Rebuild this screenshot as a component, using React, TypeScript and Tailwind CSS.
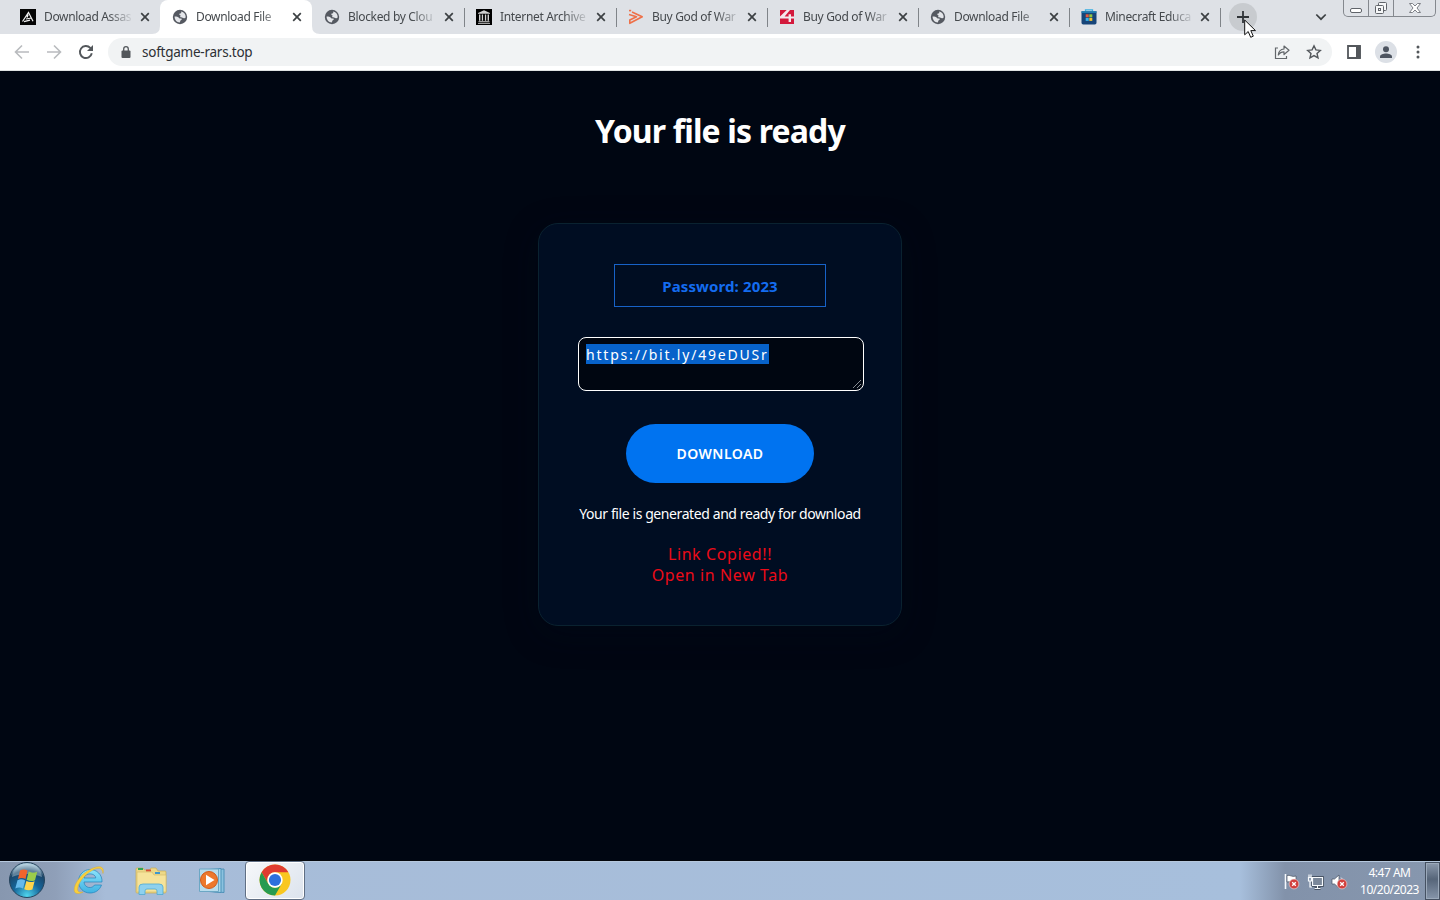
import React from "react";
import clsx from "clsx";

type Tab = {
  title: string;
  icon: React.ReactNode;
  active?: boolean;
  divider?: boolean;
  narrow?: boolean;
};

const GlobeIcon = () => (
  <svg width="16" height="16" viewBox="0 0 16 16">
    <circle cx="8" cy="8" r="7.200" fill="#555961" />
    <path
      d="M2.600 7.600c2 0 3.500.2 4.500 1.300.5.700 1.500.5 2.200.7.900.4.500 1.500-.4 1.600-.8.200-.5 1.200-1.100 2.400C4.700 13.500 2.500 10.900 2.600 7.600ZM9.200 2.400c2.900.6 4.600 3 4.500 5.900-.5 1-1.500 1.100-2.400.6-.9-.6-1.900-.2-2.700-.7-.7-.5-.5-1.400.1-1.800-.9-.4-1.600-.5-1.300-1.400.3-.7 1.500-.2 1.900-.9.200-.5-.4-.9-.1-1.700Z"
      fill="#e4e6ea"
    />
  </svg>
);

const AssassinIcon = () => (
  <svg width="16" height="16" viewBox="0 0 16 16">
    <path d="M0 0h16v16H0z" fill="#050505" />
    <path d="m2.500 12.500 6-9 4.500 8.700M6 10l5.500-1M4 12.700l6-1.500M8.200 5.500 7 8.500" fill="none" stroke="#f3f3f3" strokeWidth="1.200" />
  </svg>
);

const ArchiveIcon = () => (
  <svg width="16" height="16" viewBox="0 0 16 16">
    <path d="M0 0h16v16H0z" fill="#000" />
    <path d="m2 4 6-2.700L14 4v.8H2zM2.500 12.300h11v.9h-11zM2 14h12v.8H2zM3 5.500h1.400v6.300H3zM5.800 5.500h1.300v6.300H5.800zM8.900 5.500h1.300v6.300H8.900zM11.600 5.500H13v6.300h-1.400z" fill="#d2d2d2" />
  </svg>
);

const PlayOutlineIcon = () => (
  <svg width="16" height="16" viewBox="0 0 16 16" fill="none" stroke="#ee7048" strokeWidth="1.600">
    <path d="M4 3 14.200 7.800 1.800 14.300V11L8.500 7.700 1 5.600" strokeLinejoin="round" />
    <path d="M1 1.600h2.200" />
  </svg>
);

const FourIcon = () => (
  <svg width="16" height="16" viewBox="0 0 16 16">
    <path d="M1 1h14v14H1z" fill="#d3193c" />
    <path d="M1 7.500 7.700 1H11L5.600 7.600h4V5.300H12v2.300h3v1.900h-3V13H9.600V9.500H1z" fill="#f4e7eb" />
  </svg>
);

const StoreIcon = () => (
  <svg width="16" height="16" viewBox="0 0 16 16">
    <path d="M4.500 2.500V.8h7v1.700" fill="none" stroke="#38aee2" strokeWidth="1.300" />
    <path d="M.5 2.300h15v11.500q0 1.700-1.700 1.700H2.200Q.5 15.500.5 13.800z" fill="#174579" />
    <path d="M.5 2.300h15v1.500H.5z" fill="#2088bd" />
    <path d="M4.700 5.300h3v3h-3z" fill="#e7593b" />
    <path d="M8.300 5.300h3v3h-3z" fill="#8fc740" />
    <path d="M4.700 8.900h3v3h-3z" fill="#36b2ec" />
    <path d="M8.300 8.900h3v3h-3z" fill="#f5c330" />
  </svg>
);

const CloseIcon = () => (
  <svg width="10" height="10" viewBox="0 0 10 10" stroke="#3c4043" strokeWidth="1.700">
    <path d="m1.200 1.200 7.600 7.600M8.800 1.200 1.200 8.800" />
  </svg>
);

const tabs: Tab[] = [
  { title: "Download Assas", icon: <AssassinIcon /> },
  { title: "Download File", icon: <GlobeIcon />, active: true },
  { title: "Blocked by Clou", icon: <GlobeIcon />, divider: true },
  { title: "Internet Archive", icon: <ArchiveIcon />, divider: true },
  { title: "Buy God of War", icon: <PlayOutlineIcon />, divider: true, narrow: true },
  { title: "Buy God of War", icon: <FourIcon />, divider: true, narrow: true },
  { title: "Download File", icon: <GlobeIcon />, divider: true, narrow: true },
  { title: "Minecraft Educa", icon: <StoreIcon />, divider: true, narrow: true },
];

const BrowserTab = ({ title, icon, active, divider, narrow }: Tab) => (
  <div
    className={clsx(
      "relative flex h-[34px] shrink-0 items-center pl-3",
      narrow ? "w-[151px]" : "w-[152px]",
      active && "rounded-t-lg bg-white"
    )}
  >
    {active && (
      <>
        <svg className="absolute bottom-0 -left-2" width="8" height="8">
          <path d="M8 0v8H0q8 0 8-8" fill="#fff" />
        </svg>
        <svg className="absolute -right-2 bottom-0" width="8" height="8">
          <path d="M0 0v8h8Q0 8 0 0" fill="#fff" />
        </svg>
      </>
    )}
    {icon}
    <span
      className={clsx(
        "ml-2 text-[12px] tracking-[-0.33px] whitespace-nowrap text-[#45494d] [mask-image:linear-gradient(to_right,#000_64px,transparent_90px)]",
        narrow ? "w-[87px]" : "w-[88px]"
      )}
    >
      {title}
    </span>
    <span className="ml-2">
      <CloseIcon />
    </span>
    {divider && <span className="absolute top-2 -right-px h-[19px] w-px bg-[#808489]" />}
  </div>
);

const WindowControls = () => (
  <div className="flex h-[17px] w-[93px] self-start rounded-b-[5px] border border-t-0 border-[#84888e] bg-[#dfe2e7]">
    <div className="flex w-[25px] items-center justify-center border-r border-[#84888e]">
      <svg width="14" height="16" viewBox="0 0 14 16">
        <rect x="1.500" y="8.500" width="11" height="4" rx="1.500" fill="#fff" stroke="#60646a" />
      </svg>
    </div>
    <div className="flex w-[25px] items-center justify-center border-r border-[#84888e]">
      <svg width="14" height="16" viewBox="0 0 14 16" fill="#f6f7f8" stroke="#60646a">
        <rect x="4.500" y="2.500" width="8" height="8" rx="1" />
        <rect x="1.500" y="5.500" width="8" height="8" rx="1" />
        <rect x="4.500" y="8.500" width="2" height="2" />
      </svg>
    </div>
    <div className="flex flex-1 items-center justify-center">
      <svg width="14" height="16" viewBox="0 0 14 16">
        <path d="M1.500 3.500h3L7 6l2.500-2.500h3L9 8l3.500 4.500h-3L7 10l-2.500 2.500h-3L5 8z" fill="#fff" stroke="#70747a" strokeWidth=".9" />
      </svg>
    </div>
  </div>
);

const TabStrip = () => (
  <div className="flex h-[34px] bg-[#dee1e6] pl-2">
    {tabs.map((tab, index) => (
      <BrowserTab key={index} {...tab} />
    ))}
    <div className="relative mt-[3px] ml-[9px] flex h-7 w-7 items-center justify-center rounded-full bg-[#c8cbcf]">
      <svg width="12" height="12" viewBox="0 0 12 12" stroke="#303438" strokeWidth="1.800">
        <path d="M6 0v12M0 6h12" />
      </svg>
      <svg className="absolute top-4 left-[15px] z-10" width="13" height="20" viewBox="0 0 13 20">
        <path d="M.7 1v14.800l3.500-3.300 2.500 5.800 2.600-1.100-2.500-5.600h4.700z" fill="#fff" stroke="#111" strokeWidth="1" />
      </svg>
    </div>
    <div className="flex flex-1 items-center justify-end pr-4">
      <svg width="12" height="8" viewBox="0 0 12 8" fill="none" stroke="#3c4043" strokeWidth="1.700">
        <path d="m1.300 1.500 4.700 4.700 4.700-4.700" />
      </svg>
    </div>
    <div className="pr-1">
      <WindowControls />
    </div>
  </div>
);

const Toolbar = () => (
  <div className="flex h-[37px] items-center border-b border-[#dfe2e3] bg-white pl-[14px]">
    <svg width="16" height="16" viewBox="0 0 16 16" fill="none" stroke="#b9bbbe" strokeWidth="1.600">
      <path d="M15 8H2M8 1.500 1.500 8 8 14.500" />
    </svg>
    <svg className="ml-4" width="16" height="16" viewBox="0 0 16 16" fill="none" stroke="#b9bbbe" strokeWidth="1.600">
      <path d="M1 8h13M8 1.500 14.500 8 8 14.500" />
    </svg>
    <svg className="ml-4" width="16" height="16" viewBox="0 0 16 16" fill="none">
      <path d="M13.800 9.300A6 6 0 1 1 12.300 3.900L14 5.600" stroke="#53575b" strokeWidth="1.900" />
      <path d="M15 1v6H9z" fill="#53575b" />
    </svg>
    <div className="ml-[14px] flex h-7 w-[1224px] items-center rounded-full bg-[#f1f3f4] pr-[10px] pl-[13px]">
      <svg width="10" height="13" viewBox="0 0 10 13">
        <path d="M2.700 5V3a2.300 2.300 0 0 1 4.600 0v2" fill="none" stroke="#53575b" strokeWidth="1.300" />
        <rect x=".5" y="4.500" width="9" height="7.500" rx="1" fill="#53575b" />
      </svg>
      <span className="mt-px ml-[11px] text-[13.5px] tracking-[-0.24px] text-[#2d3034]">softgame-rars.top</span>
      <svg className="ml-auto" width="16" height="16" viewBox="0 0 16 16" fill="none" stroke="#63676b" strokeWidth="1.200">
        <path d="M4 4H1.500v10.500h11V12" />
        <path d="M10 5V2l5 4.300-5 4.200V7.800C7.500 7.800 5.500 9 4.300 11 4.600 7.500 6.500 5.300 10 5Z" strokeLinejoin="round" />
      </svg>
      <svg className="ml-4" width="16" height="16" viewBox="0 0 16 16" fill="none" stroke="#53575b" strokeWidth="1.400">
        <path d="m8 1.800 1.900 4.100 4.400.5-3.300 3 1 4.500L8 11.600l-4 2.300 1-4.500-3.300-3 4.400-.5z" />
      </svg>
    </div>
    <svg className="ml-[14px]" width="16" height="16" viewBox="0 0 16 16">
      <path d="M2 2h12v12H2z" fill="none" stroke="#53575b" strokeWidth="1.800" />
      <path d="M10 2h4.500v12H10z" fill="#53575b" />
    </svg>
    <div className="ml-[13px] flex h-[22px] w-[22px] items-center justify-center rounded-full bg-[#dce0e6]">
      <svg width="12" height="13" viewBox="0 0 12 13" fill="#4d5460">
        <circle cx="6" cy="3.200" r="3" />
        <path d="M0 12v-1.500C0 8.500 3.500 7.500 6 7.500s6 1 6 3V12z" />
      </svg>
    </div>
    <svg className="ml-[19px]" width="4" height="14" viewBox="0 0 4 14" fill="#53575b">
      <circle cx="2" cy="2" r="1.500" />
      <circle cx="2" cy="7" r="1.500" />
      <circle cx="2" cy="12" r="1.500" />
    </svg>
  </div>
);

const DownloadPage = () => (
  <main className="flex h-[789px] flex-col items-center bg-[#000612] pt-[38px] text-white">
    <h1 className="h-11 text-[32px] leading-[43px] font-bold tracking-[-0.85px] whitespace-nowrap">
      Your file is ready
    </h1>
    <section className="mt-[70px] flex h-[403px] w-[364px] flex-col items-center rounded-[20px] border border-[#0a2230] bg-[#000d22] pt-10 shadow-[0_8px_32px_rgba(0,10,24,0.4)]">
      <div className="flex h-[43px] w-[212px] items-center justify-center border border-[#1762c8] pt-0.5 text-[15px] font-bold tracking-[0.12px] whitespace-nowrap text-[#146cf0]">
        Password: 2023
      </div>
      <div className="relative mt-[30px] ml-0.5 h-[54px] w-[286px] rounded-lg border border-white bg-[#000611] px-[7px] pt-[6px]">
        <span className="block h-5 w-[183px] bg-[#0762ca] text-[14px] leading-[22px] tracking-[1.8px] whitespace-nowrap">
          https://bit.ly/49eDUSr
        </span>
        <svg className="absolute right-[2px] bottom-[2px]" width="8" height="8" stroke="#a8adb4" strokeWidth=".8">
          <path d="M0 8 8 0M4 8l4-4" />
        </svg>
      </div>
      <button className="mt-[33px] h-[59px] w-[188px] rounded-full bg-[#0073f0] text-[14px] font-semibold tracking-[0.45px]">
        DOWNLOAD
      </button>
      <p className="mt-[21px] h-5 text-[14px] leading-[20px] tracking-[-0.41px] whitespace-nowrap">
        Your file is generated and ready for download
      </p>
      <p className="mt-[20px] text-center text-[16px] leading-[21px] tracking-[0.6px] text-[#ec0b18]">
        Link Copied!!
        <br />
        Open in New Tab
      </p>
    </section>
  </main>
);

const StartOrb = () => (
  <svg width="38" height="38" viewBox="0 0 38 38">
    <defs>
      <radialGradient id="orb" cx=".5" cy=".95" r=".9">
        <stop offset="0" stopColor="#4fd6ee" />
        <stop offset=".45" stopColor="#15659a" />
        <stop offset=".8" stopColor="#1c4568" />
        <stop offset="1" stopColor="#a9c8da" />
      </radialGradient>
    </defs>
    <circle cx="19" cy="19" r="17.500" fill="url(#orb)" stroke="#26445d" />
    <path d="M4 16C5 6 12 3 19 3s14 3 15 13c-9-4-21-4-30 0" fill="#d1e5ed" opacity=".38" />
    <path d="M12 9.500c2.500-1.500 5.200-1.300 7.500 0L17.500 18c-2.500-1.400-5-1.400-7.500 0z" fill="#f0642b" />
    <path d="M20.700 10.500c2.500 1.500 5.300 1.500 8.500.2L27 19.200c-2.500 1.300-5.300 1.200-8.300-.5z" fill="#9bcc4b" />
    <path d="M9.500 19.300c2.500-1.300 5-1.200 7.700.1L15 27.500c-2.500-1.400-5-1.300-7.700 0z" fill="#66b9eb" />
    <path d="M18.400 20c2.500 1.400 5.300 1.500 8.200.2L24.400 28.500c-2.500 1.200-5.300 1.100-8.200-.3z" fill="#ffd44b" />
  </svg>
);

const ExplorerIcon = () => (
  <svg width="32" height="32" viewBox="0 0 32 32">
    <defs>
      <linearGradient id="ie" x2="0" y2="1">
        <stop stopColor="#8ce3fb" />
        <stop offset="1" stopColor="#3fb2e2" />
      </linearGradient>
    </defs>
    <path d="M29 18H11c.4 6.500 8.500 7 10.500 3h7C26.500 26.500 22 29 17 29 10.500 29 5.500 24 5.500 17.500S10.500 5.500 17 5.500 29.500 10.500 29 18ZM11 14h11.800C22.300 8.500 12 8.500 11 14Z" fill="url(#ie)" stroke="#2384bb" strokeWidth=".7" />
    <path d="M30 9.500C32 2 26 .8 17.500 5.200 8 10 1 19.500 1.200 26c.2 4 4 4.600 8.800 2-4 .7-6-.5-5.300-4C5.700 18 12 10.500 19 6.500c6-3.500 10.500-3 11 3Z" fill="#f9cf3c" stroke="#dfa820" strokeWidth=".4" />
  </svg>
);

const FolderIcon = () => (
  <svg width="34" height="32" viewBox="0 0 34 32">
    <path d="M2 5q0-1 1-1h6l1.500 2h5L17 4h5l2 3h7q1 0 1 1v20q0 1-1 1H3q-1 0-1-1z" fill="#edd887" stroke="#c7ad56" strokeWidth=".7" />
    <path d="M4 4h5v2H4z" fill="#31a553" />
    <path d="M12 5.500h5v2h-5z" fill="#d84e34" />
    <path d="M21 8h5v2h-5z" fill="#3e98cd" />
    <path d="M3 8h15l2 3h12v17H3z" fill="#f6e39a" stroke="#d7bd6b" strokeWidth=".7" />
    <path d="M5 30.500V23q0-3 4-3h16q4 0 4 3v7.500h-6V27q0-2-2-2h-8q-2 0-2 2v3.500z" fill="#8fd1ee" stroke="#4eaad3" strokeWidth=".8" />
  </svg>
);

const MediaPlayerIcon = () => (
  <svg width="28" height="27" viewBox="0 0 28 27">
    <path d="M8 3 26 2v23.500L8 24z" fill="#8bc2df" stroke="#4d91b8" />
    <path d="M5 3 23 1.500v24L5 24z" fill="#a7d6ec" stroke="#4d91b8" />
    <path d="M1.500 2h19v22.500h-19z" fill="#b8dcec" stroke="#6ba7c4" />
    <circle cx="11" cy="13" r="8.500" fill="#ed782c" stroke="#d35b19" />
    <path d="m8 7.800 8.500 5.200L8 18.200z" fill="#fff" />
  </svg>
);

const ChromeIcon = () => (
  <svg width="32" height="32" viewBox="0 0 32 32">
    <circle cx="16" cy="16" r="15.500" fill="#f9c720" />
    <path d="M2.600 8.250A15.500 15.500 0 0 1 29.400 8.250H16A7.750 7.750 0 0 0 9.300 19.870z" fill="#df3c30" />
    <path d="M2.600 8.250 9.300 19.870A7.750 7.750 0 0 0 22.700 19.870L16 31.500A15.500 15.500 0 0 1 2.600 8.250Z" fill="#279b50" />
    <circle cx="16" cy="16" r="7.700" fill="#fff" />
    <circle cx="16" cy="16" r="6.100" fill="#2d70dc" />
  </svg>
);

const ErrorBadge = () => (
  <>
    <circle cx="11" cy="11" r="4.900" fill="#d2403d" stroke="#ece0e3" strokeWidth=".6" />
    <path d="m9.200 9.200 3.600 3.600M12.800 9.200l-3.600 3.600" stroke="#fff" strokeWidth="1.300" />
  </>
);

const Taskbar = () => (
  <footer className="flex h-10 border-t border-[#04070d] bg-[linear-gradient(to_right,#8797af_0,#8f9fb8_55px,#a7bcd8_105px,#a7bfdc_1240px,#8292aa_1285px,#8797ae_100%)]">
    <div className="flex flex-1 border-t border-[#b6c8dd]">
      <div className="flex w-[245px] items-center pb-0.5 pl-2">
        <StartOrb />
        <span className="ml-[27px]"><ExplorerIcon /></span>
        <span className="ml-[29px]"><FolderIcon /></span>
        <span className="ml-[30px]"><MediaPlayerIcon /></span>
      </div>
      <div className="-mt-px flex w-[60px] items-center justify-center rounded-sm border border-[#606f84] bg-[linear-gradient(135deg,#f6f8fa,#dce3ed)] pb-px shadow-[inset_0_0_0_1px_#fff]">
        <ChromeIcon />
      </div>
      <div className="ml-auto flex items-center">
        <svg width="17" height="17" viewBox="0 0 17 17">
          <path d="M2.500 1v15" stroke="#f5f8fc" strokeWidth="1.600" />
          <path d="M4 2.500c3-1 5 2 9 .5v6C9 10.500 7 8 4 9z" fill="#fff" stroke="#475161" strokeWidth=".7" />
          <ErrorBadge />
        </svg>
        <svg className="ml-[7px]" width="17" height="17" viewBox="0 0 17 17" fill="none">
          <path d="M5.500 4.500h10v8h-10zM10.500 12.500V15M7.500 15.500h6" stroke="#36404f" strokeWidth="2.600" />
          <path d="M5.500 4.500h10v8h-10z" fill="#7a8799" />
          <path d="M5.500 4.500h10v8h-10zM10.500 12.500V15M7.500 15.500h6M1 4.500h4M1.500 4v4h3V4M3 8v6h2M2 1.500V4M4 1.500V4" stroke="#f6f9fc" strokeWidth="1.200" />
        </svg>
        <svg className="ml-[7px]" width="17" height="17" viewBox="0 0 17 17">
          <path d="M1 6h2.500L8 2v13l-4.500-4H1z" fill="#fff" stroke="#465061" strokeWidth=".7" />
          <path d="M10 4.500c2 1.500 2 6 0 8" fill="none" stroke="#dde5ed" />
          <ErrorBadge />
        </svg>
        <div className="ml-[9px] w-[65px] pb-px text-center text-[12px] leading-[17px] tracking-[-0.5px] whitespace-nowrap text-white">
          4:47 AM
          <br />
          10/20/2023
        </div>
        <div className="ml-[3px] h-full w-[15px] border border-[#455162] bg-[linear-gradient(to_bottom,#8b99ac,#566579_45%,#8695aa)] shadow-[inset_0_0_0_1px_#9ba9ba]" />
      </div>
    </div>
  </footer>
);

const App = () => (
  <div className="h-[900px] w-[1440px] overflow-hidden font-['Noto_Sans','Open_Sans',sans-serif]">
    <TabStrip />
    <Toolbar />
    <DownloadPage />
    <Taskbar />
  </div>
);

export default App;
